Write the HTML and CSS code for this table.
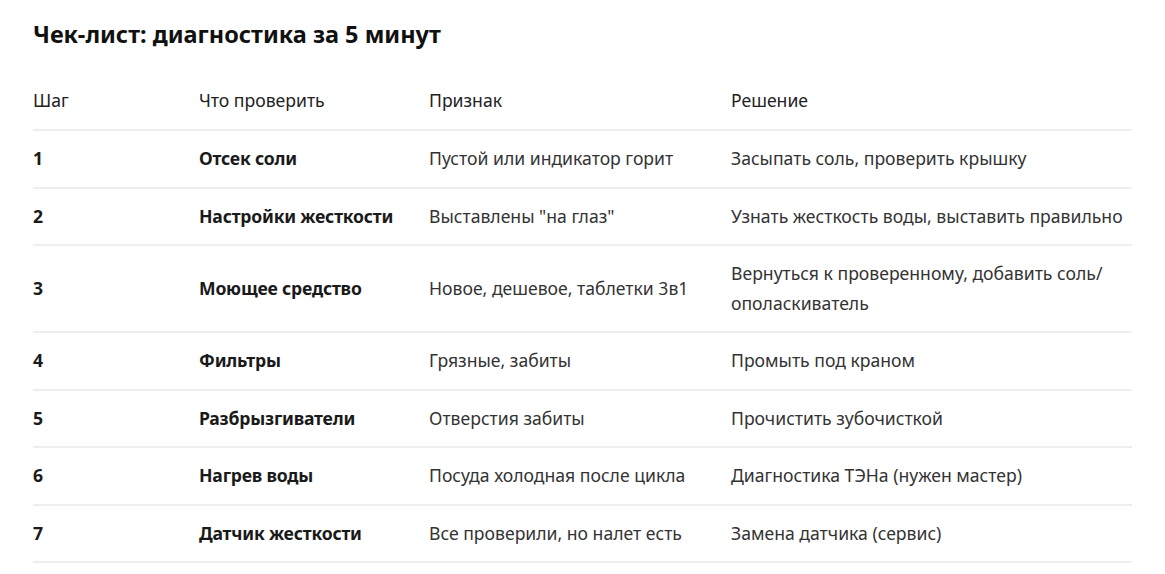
FILE: index.html
```html
<!DOCTYPE html>
<html lang="ru">
<head>
<meta charset="utf-8">
<title>Чек-лист</title>
<link rel="stylesheet" href="styles.css">
</head>
<body>
<main class="page">
  <h2 class="title">Чек-лист: диагностика за 5 минут</h2>
  <table class="check">
    <colgroup>
      <col class="c1"><col class="c2"><col class="c3"><col class="c4">
    </colgroup>
    <thead>
      <tr><th>Шаг</th><th>Что проверить</th><th>Признак</th><th>Решение</th></tr>
    </thead>
    <tbody>
      <tr><td class="b">1</td><td class="b">Отсек соли</td><td>Пустой или индикатор горит</td><td>Засыпать соль, проверить крышку</td></tr>
      <tr><td class="b">2</td><td class="b">Настройки жесткости</td><td>Выставлены "на глаз"</td><td>Узнать жесткость воды, выставить правильно</td></tr>
      <tr><td class="b">3</td><td class="b">Моющее средство</td><td>Новое, дешевое, таблетки 3в1</td><td>Вернуться к проверенному, добавить соль/ ополаскиватель</td></tr>
      <tr><td class="b">4</td><td class="b">Фильтры</td><td>Грязные, забиты</td><td>Промыть под краном</td></tr>
      <tr><td class="b">5</td><td class="b">Разбрызгиватели</td><td>Отверстия забиты</td><td>Прочистить зубочисткой</td></tr>
      <tr><td class="b">6</td><td class="b">Нагрев воды</td><td>Посуда холодная после цикла</td><td>Диагностика ТЭНа (нужен мастер)</td></tr>
      <tr><td class="b">7</td><td class="b">Датчик жесткости</td><td>Все проверили, но налет есть</td><td>Замена датчика (сервис)</td></tr>
    </tbody>
  </table>
</main>
</body>
</html>
```
FILE: styles.css
```css
html, body {
  margin: 0;
  padding: 0;
  background: #fff;
}
body {
  font-family: "Noto Sans", "Open Sans", "Liberation Sans", sans-serif;
  color: #333;
}
.page {
  padding: 17px 33px 0 33px;
  width: 1099px;
}
.title {
  margin: 0 0 35px 0;
  font-size: 23.5px;
  line-height: 34px;
  font-weight: 700;
  color: #111;
}
.check {
  width: 100%;
  border-collapse: collapse;
  table-layout: fixed;
  font-size: 17.6px;
}
.c1 { width: 166px; }
.c2 { width: 230px; }
.c3 { width: 302px; }
.check th {
  text-align: left;
  font-weight: 400;
  color: #222;
  padding: 0 6px 14px 0;
  line-height: 29px;
  border-bottom: 2px solid #eee;
}
.check td {
  padding: 13.25px 6px 12.75px 0;
  line-height: 29.5px;
  border-bottom: 2px solid #eee;
  vertical-align: middle;
}
.check th:last-child,
.check td:last-child {
  padding-right: 0;
}
.check td.b {
  font-weight: 700;
  color: #1a1a1a;
  letter-spacing: -0.2px;
}
```
